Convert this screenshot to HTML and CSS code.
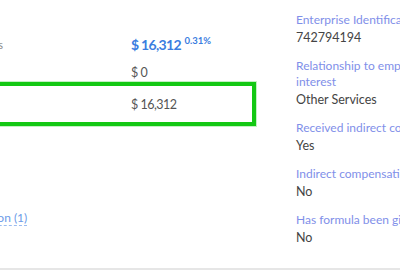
FILE: index.html
```html
<!DOCTYPE html>
<html lang="en">
<head>
    <meta charset="UTF-8">
    <title>Service provider compensation</title>
    <link rel="stylesheet" href="styles.css">
</head>
<body>
    <div class="page">
        <div class="main">
            <div class="summary">
                <div class="rows">
                    <div class="row row-total">
                        <div class="label">Total service provider fees</div>
                        <div class="value total">$ 16,312 <sup>0.31%</sup></div>
                    </div>
                    <div class="row row-direct">
                        <div class="label">Direct compensation</div>
                        <div class="value">$ 0</div>
                    </div>
                    <div class="row row-hl">
                        <div class="label">Indirect compensation</div>
                        <div class="value">$ 16,312</div>
                    </div>
                </div>
                <a class="more" href="#">Show indirect compensation (1)</a>
            </div>
            <div class="details">
                <div class="field">
                    <div class="f-label">Enterprise Identification Number</div>
                    <div class="f-value">742794194</div>
                </div>
                <div class="field">
                    <div class="f-label">Relationship to employer or party in interest</div>
                    <div class="f-value">Other Services</div>
                </div>
                <div class="field">
                    <div class="f-label">Received indirect compensation</div>
                    <div class="f-value">Yes</div>
                </div>
                <div class="field">
                    <div class="f-label">Indirect compensation eligible</div>
                    <div class="f-value">No</div>
                </div>
                <div class="field">
                    <div class="f-label">Has formula been given</div>
                    <div class="f-value">No</div>
                </div>
            </div>
        </div>
        <div class="footer-line"></div>
    </div>
</body>
</html>
```

FILE: styles.css
```css
html,body{margin:0;padding:0;background:#fff;}
body{font-family:Lato,"Liberation Sans",sans-serif;color:#555;overflow:hidden;}
.page{width:400px;height:270px;display:flex;flex-direction:column;overflow:hidden;}
.main{flex:1;display:flex;min-height:0;}
.footer-line{height:2px;background:#e6e6e6;}

.summary{flex:0 0 296px;}
.rows{margin-left:-220px;padding-top:32px;}
.row{display:grid;grid-template-columns:351px 1fr;align-items:center;}
.row-total{height:24px;}
.row-total .label{text-align:right;padding-right:128px;}
.row-direct{height:26px;align-items:end;}
.row-direct .value{line-height:18px;}
.label{font-size:11px;color:#8a8a8a;white-space:nowrap;overflow:hidden;}
.value{font-size:12.5px;color:#555;letter-spacing:-.5px;}
.total{font-size:14px;font-weight:700;color:#3b7de0;letter-spacing:-.7px;}
.total sup{font-size:9.5px;font-weight:700;vertical-align:6px;letter-spacing:0;margin-left:1px;}
.row-hl{height:36px;width:468px;grid-template-columns:347px 1fr;border:4px solid #14c814;box-shadow:0 0 0 1px rgba(20,200,20,.25);}
.more{display:inline-block;margin:84px 0 0 -138px;font-size:12px;color:#6c9be8;text-decoration:none;border-bottom:1px dashed #9bbcf0;line-height:15px;white-space:nowrap;}

.details{flex:0 0 200px;padding-top:12px;}
.field{margin-bottom:10px;}
.f-label{font-size:12px;line-height:16px;color:#7f8fe9;width:200px;}
.f-value{font-size:12.5px;line-height:20px;color:#444;white-space:nowrap;}
```
